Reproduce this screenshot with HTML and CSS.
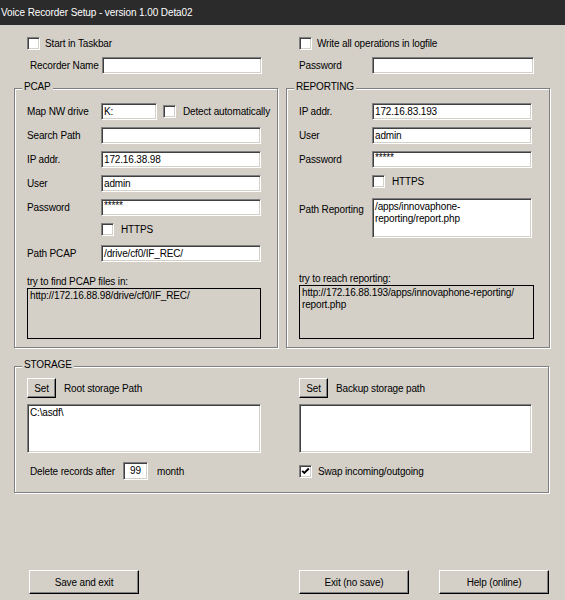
FILE: index.html
```html
<!DOCTYPE html>
<html>
<head>
<meta charset="utf-8">
<title>Voice Recorder Setup</title>
<link rel="stylesheet" href="styles.css">
</head>
<body>
<div class="window">
  <div class="titlebar">Voice Recorder Setup - version 1.00 Deta02</div>

  <div class="top">
    <div class="col">
      <div class="chk-row"><span class="cb"></span><span>Start in Taskbar</span></div>
      <div class="row"><span class="lbl lbl-rec">Recorder Name</span><span class="field w160"></span></div>
    </div>
    <div class="col">
      <div class="chk-row"><span class="cb"></span><span>Write all operations in logfile</span></div>
      <div class="row"><span class="lbl">Password</span><span class="field w162"></span></div>
    </div>
  </div>

  <div class="groups">
    <div class="group g-half">
      <span class="legend">PCAP</span>
      <div class="rows">
        <div class="row">
          <span class="lbl lbl-pcap">Map NW drive</span>
          <span class="field w56">K:</span>
          <span class="cb cb-detect"></span>
          <span class="cb-text">Detect automatically</span>
        </div>
        <div class="row"><span class="lbl lbl-pcap">Search Path</span><span class="field w160"></span></div>
        <div class="row"><span class="lbl lbl-pcap">IP addr.</span><span class="field w160">172.16.38.98</span></div>
        <div class="row"><span class="lbl lbl-pcap">User</span><span class="field w160">admin</span></div>
        <div class="row"><span class="lbl lbl-pcap">Password</span><span class="field w160 pw">*****</span></div>
        <div class="chk-row chk-pcap"><span class="cb"></span><span>HTTPS</span></div>
        <div class="row row-path"><span class="lbl lbl-pcap">Path PCAP</span><span class="field w160">/drive/cf0/IF_REC/</span></div>
      </div>
      <div class="try">
        <div class="try-label">try to find PCAP files in:</div>
        <div class="try-box try-pcap">http://172.16.88.98/drive/cf0/IF_REC/</div>
      </div>
    </div>

    <div class="group g-half">
      <span class="legend">REPORTING</span>
      <div class="rows">
        <div class="row"><span class="lbl">IP addr.</span><span class="field w160">172.16.83.193</span></div>
        <div class="row"><span class="lbl">User</span><span class="field w160">admin</span></div>
        <div class="row"><span class="lbl">Password</span><span class="field w160 pw">*****</span></div>
        <div class="chk-row chk-rep"><span class="cb"></span><span>HTTPS</span></div>
        <div class="row row-top row-rep-path">
          <span class="lbl lbl-multi">Path Reporting</span>
          <span class="field area w160 h40">/apps/innovaphone-<br>reporting/report.php</span>
        </div>
      </div>
      <div class="try">
        <div class="try-label">try to reach reporting:</div>
        <div class="try-box try-rep">http://172.16.88.193/apps/innovaphone-reporting/<br>report.php</div>
      </div>
    </div>
  </div>

  <div class="group g-storage">
    <span class="legend legend-sto">STORAGE</span>
    <div class="sto-grid">
      <div class="set-row"><span class="btn btn-set">Set</span><span>Root storage Path</span></div>
      <div class="set-row"><span class="btn btn-set">Set</span><span>Backup storage path</span></div>
      <div class="field area w234 h49">C:\asdf\</div>
      <div class="field area w233 h49"></div>
      <div class="row del-row">
        <span class="del-lbl">Delete records after</span>
        <span class="field num">99</span>
        <span class="month">month</span>
      </div>
      <div class="chk-row swap-row">
        <span class="cb checked"><svg width="9" height="9" viewBox="0 0 9 9"><polyline points="1.2,3.8 3.3,6 7.8,1.5" fill="none" stroke="#000" stroke-width="1.9"/></svg></span>
        <span>Swap incoming/outgoing</span>
      </div>
    </div>
  </div>

  <div class="buttons">
    <span class="btn btn-big">Save and exit</span>
    <span class="btn btn-big btn-exit">Exit (no save)</span>
    <span class="btn btn-big btn-help">Help (online)</span>
  </div>
</div>
</body>
</html>
```

FILE: styles.css
```css
* { box-sizing: border-box; }
html, body { margin: 0; padding: 0; }
body {
  background: #d4d0c8;
  font-family: "Liberation Sans", Arial, sans-serif;
  font-size: 10px;
  letter-spacing: -0.15px;
  color: #000;
}
.window {
  width: 565px;
  height: 600px;
  overflow: hidden;
  background: #d4d0c8;
}
.titlebar {
  height: 25px;
  background: #2b2b2b;
  color: #fff;
  padding-left: 1px;
  line-height: 26px;
  white-space: nowrap;
  letter-spacing: -0.1px;
}

/* top section */
.top {
  display: grid;
  grid-template-columns: 272px 1fr;
  padding: 12px 0 0 27px;
}
.col { display: flex; flex-direction: column; gap: 7px; }

.row { display: flex; align-items: center; }
.row-top { align-items: flex-start; }
.lbl { width: 73px; flex: none; white-space: nowrap; }
.lbl-rec { width: 72px; margin-left: 3px; }
.lbl-pcap { width: 74px; }
.lbl-multi { padding-top: 6px; }

.chk-row { display: flex; align-items: center; gap: 5px; height: 13px; white-space: nowrap; }

.cb {
  width: 13px;
  height: 13px;
  flex: none;
  background: #fff;
  border: 1px solid;
  border-color: #808080 #fff #fff #808080;
  box-shadow: inset 1px 1px 0 #404040, inset -1px -1px 0 #d4d0c8;
  display: flex;
  align-items: center;
  justify-content: center;
}
.cb svg { display: block; }
.cb-detect { margin-left: 6px; }
.cb-text { margin-left: 7px; white-space: nowrap; }

.field {
  display: block;
  height: 17px;
  flex: none;
  background: #fff;
  border: 1px solid;
  border-color: #808080 #fff #fff #808080;
  box-shadow: inset 1px 1px 0 #404040, inset -1px -1px 0 #d4d0c8;
  padding: 0 2px;
  line-height: 15px;
  white-space: nowrap;
  overflow: hidden;
}
.field.area { white-space: normal; line-height: 12px; padding-top: 2px; }
.field.pw { line-height: 11px; }
.w56 { width: 56px; }
.w160 { width: 160px; }
.w162 { width: 162px; }
.w234 { width: 234px; }
.w233 { width: 233px; }
.h40 { height: 40px; }
.h49 { height: 49px; }

/* group boxes */
.groups {
  display: flex;
  gap: 8px;
  margin: 14px 0 0 14px;
}
.group {
  border: 1px solid #808080;
  box-shadow: 1px 1px 0 #fff, inset 1px 1px 0 #fff;
  padding: 0 12px 8px 12px;
  display: flex;
  flex-direction: column;
}
.g-half { width: 264px; height: 260px; }
.legend {
  display: block;
  width: max-content;
  margin: -8px 0 10px -5px;
  padding: 0 2px;
  background: #d4d0c8;
  height: 12px;
  line-height: 12px;
}
.legend-sto { margin-bottom: 7px; }

.rows { display: flex; flex-direction: column; gap: 7px; }
.chk-pcap { padding-left: 74px; gap: 7px; }
.chk-rep { padding-left: 73px; gap: 7px; }
.row-path { margin-top: 2px; }
.row-rep-path { margin-top: 3px; }

.try { margin-top: auto; }
.try-label { height: 12px; line-height: 12px; white-space: nowrap; }
.try-box {
  border: 1px solid #000;
  padding: 1px 2px;
  line-height: 12px;
  white-space: nowrap;
}
.try-pcap { width: 234px; height: 51px; }
.try-rep { width: 235px; height: 54px; }

/* storage */
.g-storage {
  width: 535px;
  height: 127px;
  margin: 18px 0 0 14px;
  padding-top: 0;
}
.sto-grid {
  display: grid;
  grid-template-columns: 272px 1fr;
  row-gap: 6px;
}
.set-row { display: flex; align-items: center; gap: 8px; height: 20px; white-space: nowrap; }
.del-row { margin-top: 3px; height: 18px; }
.del-lbl { margin-left: 3px; width: 93px; white-space: nowrap; }
.field.num { width: 25px; height: 18px; text-align: center; line-height: 16px; }
.month { margin-left: 9px; }
.swap-row { margin-top: 3px; height: 18px; gap: 6px; }

/* buttons */
.btn {
  display: flex;
  align-items: center;
  justify-content: center;
  flex: none;
  background: #d4d0c8;
  border: 1px solid;
  border-color: #fff #000 #000 #fff;
  box-shadow: inset -1px -1px 0 #808080;
  white-space: nowrap;
}
.btn-set { width: 29px; height: 20px; }
.buttons {
  display: flex;
  margin-top: 77px;
  padding-left: 29px;
}
.btn-big { width: 110px; height: 24px; }
.btn-exit { margin-left: 160px; }
.btn-help { margin-left: 30px; }
```
